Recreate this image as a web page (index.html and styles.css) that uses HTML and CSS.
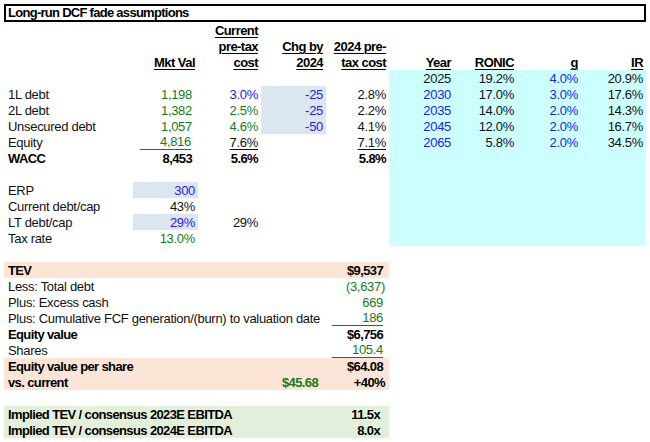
FILE: index.html
```html
<!DOCTYPE html>
<html>
<head>
<meta charset="utf-8">
<link rel="stylesheet" href="styles.css">
</head>
<body>
<div class="sheet">
  <div class="c title s9">Long-run DCF fade assumptions</div>

  <div class="c s2"></div><div class="c h">Current</div><div class="c s6"></div>

  <div class="c s2"></div><div class="c h">pre-tax</div><div class="c h">Chg by</div><div class="c h">2024 pre-</div><div class="c s4"></div>

  <div class="c"></div><div class="c h">Mkt Val</div><div class="c h">cost</div><div class="c h">2024</div><div class="c h">tax cost</div>
  <div class="c h hy">Year</div><div class="c h">RONIC</div><div class="c h">g</div><div class="c h">IR</div>

  <div class="c s5"></div><div class="c r cy y">2025</div><div class="c r cy">19.2%</div><div class="c r cy u">4.0%</div><div class="c r cy">20.9%</div>

  <div class="c lab">1L debt</div><div class="c r g p">1,198</div><div class="c r u">3.0%</div><div class="c r u bl">-25</div><div class="c r">2.8%</div>
  <div class="c r cy u y">2030</div><div class="c r cy">17.0%</div><div class="c r cy u">3.0%</div><div class="c r cy">17.6%</div>

  <div class="c lab">2L debt</div><div class="c r g p">1,382</div><div class="c r g">2.5%</div><div class="c r u bl">-25</div><div class="c r">2.2%</div>
  <div class="c r cy u y">2035</div><div class="c r cy">14.0%</div><div class="c r cy u">2.0%</div><div class="c r cy">14.3%</div>

  <div class="c lab">Unsecured debt</div><div class="c r g p">1,057</div><div class="c r g">4.6%</div><div class="c r u bl">-50</div><div class="c r">4.1%</div>
  <div class="c r cy u y">2045</div><div class="c r cy">12.0%</div><div class="c r cy u">2.0%</div><div class="c r cy">16.7%</div>

  <div class="c lab">Equity</div><div class="c r g acc acc-b"><span>4,816</span></div><div class="c r"><span class="ul">7.6%</span></div><div class="c"></div><div class="c r"><span class="ul">7.1%</span></div>
  <div class="c r cy u y">2065</div><div class="c r cy">5.8%</div><div class="c r cy u">2.0%</div><div class="c r cy">34.5%</div>

  <div class="c lab b">WACC</div><div class="c r b p">8,453</div><div class="c r b">5.6%</div><div class="c"></div><div class="c r b">5.8%</div><div class="c cy s4"></div>

  <div class="c s5"></div><div class="c cy s4"></div>

  <div class="c lab">ERP</div><div class="c r u bl">300</div><div class="c s3"></div><div class="c cy s4"></div>

  <div class="c lab">Current debt/cap</div><div class="c r">43%</div><div class="c s3"></div><div class="c cy s4"></div>

  <div class="c lab">LT debt/cap</div><div class="c r u bl">29%</div><div class="c r">29%</div><div class="c s2"></div><div class="c cy s4"></div>

  <div class="c lab">Tax rate</div><div class="c r g">13.0%</div><div class="c s3"></div><div class="c cy s4"></div>

  <div class="c s9"></div>

  <div class="c lab b pk s4">TEV</div><div class="c r b pk p">$9,537</div><div class="c s4"></div>

  <div class="c lab s4">Less: Total debt</div><div class="c r g pp">(3,637)</div><div class="c s4"></div>

  <div class="c lab s4">Plus: Excess cash</div><div class="c r g p">669</div><div class="c s4"></div>

  <div class="c lab s4">Plus: Cumulative FCF generation/(burn) to valuation date</div><div class="c r g acc acc-e"><span>186</span></div><div class="c s4"></div>

  <div class="c lab b s4">Equity value</div><div class="c r b p">$6,756</div><div class="c s4"></div>

  <div class="c lab s4">Shares</div><div class="c r g acc acc-e"><span>105.4</span></div><div class="c s4"></div>

  <div class="c lab b pk s4">Equity value per share</div><div class="c r b pk p">$64.08</div><div class="c s4"></div>

  <div class="c lab b pk s3">vs. current</div><div class="c r b g pk px">$45.68</div><div class="c r b pk pp">+40%</div><div class="c s4"></div>

  <div class="c s9"></div>

  <div class="c lab b gr s4">Implied TEV / consensus 2023E EBITDA</div><div class="c r b gr pm">11.5x</div><div class="c s4"></div>

  <div class="c lab b gr s4">Implied TEV / consensus 2024E EBITDA</div><div class="c r b gr pm">8.0x</div><div class="c s4"></div>
</div>
</body>
</html>
```

FILE: styles.css
```css
html, body {
  margin: 0;
  padding: 0;
  background: #ffffff;
}

body {
  font-family: "Liberation Sans", Arial, sans-serif;
  font-size: 13px;
  color: #111111;
  letter-spacing: -0.3px;
}

.sheet {
  display: grid;
  grid-template-columns: 129px 65px 63px 65px 63px 64px 64px 64px 65px;
  grid-template-rows: 18px;
  grid-auto-rows: 16px;
  padding: 4px 0 0 4px;
}

.c {
  box-sizing: border-box;
  height: 16px;
  padding: 1px 3px 0 3px;
  line-height: 15px;
  white-space: nowrap;
}

.s2 { grid-column: span 2; }
.s3 { grid-column: span 3; }
.s4 { grid-column: span 4; }
.s5 { grid-column: span 5; }
.s6 { grid-column: span 6; }
.s9 { grid-column: span 9; }

.title {
  height: 18px;
  border: 2px solid #000000;
  padding: 0 2px;
  line-height: 14px;
  font-weight: bold;
  letter-spacing: -0.72px;
  color: #000000;
}

.lab { padding-left: 4px; }

.r { text-align: right; }

.b {
  font-weight: bold;
  letter-spacing: -0.62px;
  color: #000000;
}

.h {
  text-align: right;
  font-weight: bold;
  letter-spacing: -0.55px;
  color: #000000;
  text-decoration: underline;
  text-decoration-thickness: 1px;
  text-underline-offset: 2px;
}

.hy { padding-right: 2px; }
.y { padding-right: 2px; }

.g { color: #17791f; }
.u { color: #2a22d8; }

.p { padding-right: 6px; }
.pp { padding-right: 4px; }
.px { padding-right: 8px; }
.pm { padding-right: 9px; }

.bl { background: #dce6f1; }
.cy { background: #ccffff; }
.pk { background: #fce4d6; }
.gr { background: #e2efda; }

.ul {
  text-decoration: underline;
  text-decoration-thickness: 1px;
  text-underline-offset: 2px;
}

.acc { padding-top: 0; }
.acc span {
  display: block;
  height: 16px;
  padding-top: 1px;
  box-sizing: border-box;
  line-height: 14px;
  border-bottom: 1px solid #17791f;
}
.acc-b { padding-left: 7px; padding-right: 7px; }
.acc-e { padding-left: 6px; padding-right: 6px; }
```
